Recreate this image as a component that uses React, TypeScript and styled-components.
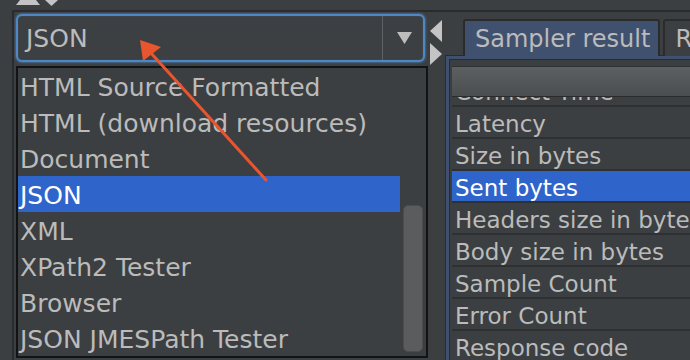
import React from "react";
import styled, { createGlobalStyle } from "styled-components";

const GlobalStyle = createGlobalStyle`
  html, body { margin: 0; padding: 0; background: #3c3f41; overflow: hidden; }
  * { box-sizing: border-box; }
`;

const FONT = `"DejaVu Sans", "Noto Sans", sans-serif`;

const Root = styled.div`
  position: relative;
  width: 690px;
  height: 360px;
  overflow: hidden;
  background: #3c3f41;
  font-family: ${FONT};
  color: #bbbbbb;
`;

const TopStrip = styled.div`
  height: 10px;
  display: flex;
  align-items: flex-start;
`;

const Frame = styled.div`
  margin-left: 12px;
  border-top: 2px solid #2b2b2b;
  border-left: 2px solid #2b2b2b;
  padding-left: 2px;
  display: flex;
  height: 350px;
`;

const LeftColumn = styled.div`
  width: 412px;
  flex: none;
  display: flex;
  flex-direction: column;
  padding-top: 2px;
  gap: 4px;
`;

const Combo = styled.div`
  width: 409px;
  height: 48px;
  flex: none;
  border: 2px solid #4e87c5;
  border-radius: 6px;
  box-shadow: 0 0 2px 1px rgba(74, 136, 199, 0.55), inset 0 0 1px rgba(74, 136, 199, 0.6);
  background: #3d4042;
  display: flex;
  align-items: stretch;
`;

const ComboValue = styled.div`
  flex: 1;
  display: flex;
  align-items: center;
  padding-left: 8px;
  font-size: 25px;
  color: #bbbbbb;
  border-right: 1px solid #5e6163;
`;

const ComboButton = styled.div`
  width: 40px;
  display: flex;
  align-items: center;
  justify-content: center;
  padding-left: 3px;
`;

const List = styled.div`
  width: 412px;
  height: 292px;
  flex: none;
  border: 2px solid #131313;
  display: flex;
  background: #3c3f41;
`;

const Items = styled.div`
  flex: 1;
  overflow: hidden;
`;

const Item = styled.div<{ $selected?: boolean }>`
  height: 36px;
  padding: 4px 0 0 2px;
  line-height: 32px;
  font-size: 25px;
  white-space: nowrap;
  background: ${(p) => (p.$selected ? "#2f65ca" : "transparent")};
  color: ${(p) => (p.$selected ? "#ffffff" : "#bbbbbb")};
`;

const ScrollTrack = styled.div`
  width: 26px;
  flex: none;
  padding: 0 3px 4px 3px;
  display: flex;
  flex-direction: column;
`;

const Thumb = styled.div<{ $top: number; $height: number }>`
  margin-top: ${(p) => p.$top}px;
  height: ${(p) => p.$height}px;
  width: 20px;
  border-radius: 5px;
  background: #5a5c5e;
  border: 1px solid #4a4c4e;
`;

const Splitter = styled.div`
  width: 17px;
  flex: none;
  display: flex;
  flex-direction: column;
  padding-top: 8px;
  padding-left: 2px;
`;

const RightPanel = styled.div`
  flex: 1;
  min-width: 0;
  display: flex;
  flex-direction: column;
`;

const TabStrip = styled.div`
  height: 44px;
  flex: none;
  display: flex;
  align-items: flex-end;
  padding-left: 18px;
  gap: 3px;
  border-bottom: 1px solid #2b2b2b;
  margin-bottom: -1px;
  position: relative;
  z-index: 1;
`;

const Tab = styled.div<{ $active?: boolean }>`
  height: 37px;
  margin-bottom: -1px;
  padding: 0 8px 0 10px;
  display: flex;
  align-items: center;
  font-size: 24px;
  white-space: nowrap;
  border: 2px solid #2b2b2b;
  border-bottom: none;
  border-radius: 3px 3px 0 0;
  background: ${(p) => (p.$active ? "#40516f" : "#3c3f41")};
  color: #bbbbbb;
`;

const PanelOuter = styled.div`
  flex: 1;
  min-height: 0;
  overflow: hidden;
  border-left: 1px solid #2b2b2b;
  border-top: 1px solid #2b2b2b;
`;

const PanelBlue = styled.div`
  height: 100%;
  border-left: 3px solid #40516f;
  border-top: 3px solid #40516f;
`;

const PanelInner = styled.div`
  height: 100%;
  border-left: 1px solid #2b2b2b;
  border-top: 1px solid #2b2b2b;
  padding: 6px 0 0 2px;
  display: flex;
  flex-direction: column;
`;

const TableHeader = styled.div`
  height: 31px;
  flex: none;
  background: linear-gradient(#5d6062, #4b4e50);
  border-top: 1px solid #2e3032;
  border-bottom: 1px solid #2b2b2b;
  position: relative;
  z-index: 1;
`;

const RowsViewport = styled.div`
  flex: 1;
  min-height: 0;
  overflow: hidden;
`;

const Rows = styled.div<{ $offset: number }>`
  margin-top: ${(p) => -p.$offset}px;
`;

const Row = styled.div<{ $selected?: boolean }>`
  height: 32px;
  padding: 4px 0 0 3px;
  line-height: 26px;
  font-size: 23px;
  white-space: nowrap;
  border-bottom: 2px solid #2e3032;
  background: ${(p) => (p.$selected ? "#2f65ca" : "transparent")};
  color: ${(p) => (p.$selected ? "#ffffff" : "#bbbbbb")};
`;

const Overlay = styled.svg`
  position: absolute;
  left: 0;
  top: 0;
  pointer-events: none;
`;

const options = [
  "HTML Source Formatted",
  "HTML (download resources)",
  "Document",
  "JSON",
  "XML",
  "XPath2 Tester",
  "Browser",
  "JSON JMESPath Tester",
];

const fields = [
  "Connect Time",
  "Latency",
  "Size in bytes",
  "Sent bytes",
  "Headers size in bytes",
  "Body size in bytes",
  "Sample Count",
  "Error Count",
  "Response code",
];

export default function App() {
  const selected = "JSON";
  return (
    <>
      <GlobalStyle />
      <Root>
        <TopStrip>
          <svg width="60" height="10" viewBox="0 0 60 10">
            <polygon points="16,5 40,5 28,-10" fill="#c4c4c4" />
            <polygon points="45,0 58,0 51.5,6" fill="#c4c4c4" />
          </svg>
        </TopStrip>
        <Frame>
          <LeftColumn>
            <Combo>
              <ComboValue>{selected}</ComboValue>
              <ComboButton>
                <svg width="15" height="12" viewBox="0 0 15 12">
                  <polygon points="0,0 15,0 7.5,12" fill="#bdbdbd" />
                </svg>
              </ComboButton>
            </Combo>
            <List>
              <Items>
                {options.map((o) => (
                  <Item key={o} $selected={o === selected}>
                    {o}
                  </Item>
                ))}
              </Items>
              <ScrollTrack>
                <Thumb $top={137} $height={147} />
              </ScrollTrack>
            </List>
          </LeftColumn>
          <Splitter>
            <svg width="12" height="45" viewBox="0 0 12 45">
              <polygon points="12,0 12,22 0,11" fill="#c4c4c4" />
              <polygon points="0,23 0,45 12,34" fill="#c4c4c4" />
            </svg>
          </Splitter>
          <RightPanel>
            <TabStrip>
              <Tab $active>Sampler result</Tab>
              <Tab>Request</Tab>
            </TabStrip>
            <PanelOuter>
              <PanelBlue>
                <PanelInner>
                  <TableHeader />
                  <RowsViewport>
                    <Rows $offset={22}>
                      {fields.map((f) => (
                        <Row key={f} $selected={f === "Sent bytes"}>
                          {f}
                        </Row>
                      ))}
                    </Rows>
                  </RowsViewport>
                </PanelInner>
              </PanelBlue>
            </PanelOuter>
          </RightPanel>
        </Frame>
        <Overlay width="690" height="360" viewBox="0 0 690 360">
          <line x1="266" y1="180" x2="150" y2="52" stroke="#e8552f" strokeWidth="3" strokeLinecap="round" />
          <polygon points="140,40 143,61 161,47" fill="#e8552f" />
        </Overlay>
      </Root>
    </>
  );
}
